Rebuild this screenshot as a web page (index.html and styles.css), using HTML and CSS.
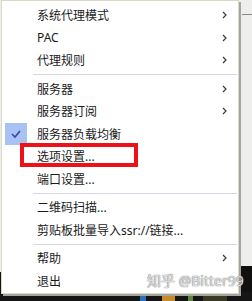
FILE: index.html
```html
<!DOCTYPE html>
<html lang="zh-CN">
<head>
	<meta charset="UTF-8">
	<title>菜单</title>
	<link rel="stylesheet" href="styles.css">
</head>
<body>
<div class="screen">
    <div class="menu">
        <div class="item"><span class="mark"></span><span class="label">系统代理模式</span><span class="arrow"><svg width="5" height="8" viewBox="0 0 5 8"><polyline points="1,1 4,4 1,7"/></svg></span></div>
        <div class="item"><span class="mark"></span><span class="label">PAC</span><span class="arrow"><svg width="5" height="8" viewBox="0 0 5 8"><polyline points="1,1 4,4 1,7"/></svg></span></div>
        <div class="item"><span class="mark"></span><span class="label">代理规则</span><span class="arrow"><svg width="5" height="8" viewBox="0 0 5 8"><polyline points="1,1 4,4 1,7"/></svg></span></div>
        <div class="sep"></div>
        <div class="item"><span class="mark"></span><span class="label">服务器</span><span class="arrow"><svg width="5" height="8" viewBox="0 0 5 8"><polyline points="1,1 4,4 1,7"/></svg></span></div>
        <div class="item"><span class="mark"></span><span class="label">服务器订阅</span><span class="arrow"><svg width="5" height="8" viewBox="0 0 5 8"><polyline points="1,1 4,4 1,7"/></svg></span></div>
        <div class="item"><span class="mark checked"><svg width="22" height="22" viewBox="0 0 22 22"><polyline points="7,11 10,14 15,8"/></svg></span><span class="label">服务器负载均衡</span></div>
        <div class="item"><span class="mark"></span><span class="label">选项设置...</span></div>
        <div class="item"><span class="mark"></span><span class="label">端口设置...</span></div>
        <div class="sep"></div>
        <div class="item"><span class="mark"></span><span class="label">二维码扫描...</span></div>
        <div class="item"><span class="mark"></span><span class="label">剪贴板批量导入ssr://链接...</span></div>
        <div class="sep"></div>
        <div class="item"><span class="mark"></span><span class="label">帮助</span><span class="arrow"><svg width="5" height="8" viewBox="0 0 5 8"><polyline points="1,1 4,4 1,7"/></svg></span></div>
        <div class="item"><span class="mark"></span><span class="label">退出</span></div>
    </div>
    <div class="highlight"></div>
    <div class="watermark">知乎 @Bitter99</div>
</div>
</body>
</html>
```

FILE: styles.css
```css
*
{
    margin: 0;
    padding: 0;
    box-sizing: border-box;
}
body
{
    font-family: "Noto Sans", "Noto Sans CJK SC", sans-serif;
    font-size: 12px;
    color: #1b1b1b;
}
.screen
{
    position: relative;
    overflow: hidden;
    display: flex;
    align-items: flex-start;
    width: 252px;
    height: 301px;

    background:
        linear-gradient(#2a6fc0, #2a6fc0) 140px 296px / 6px 5px no-repeat,
        linear-gradient(#c88a2a, #c88a2a) 162px 295px / 13px 6px no-repeat,
        linear-gradient(#5c8a3a, #5c8a3a) 188px 296px / 5px 5px no-repeat,
        linear-gradient(#3a3a22, #3a3a22) 203px 294px / 24px 7px no-repeat,
        linear-gradient(#151515, #151515) 0 292px / 100% 9px no-repeat,
        linear-gradient(#151515, #151515) 0 272px / 2px 20px no-repeat,
        linear-gradient(#101010, #101010) 240px 266px / 12px 26px no-repeat,
        linear-gradient(#8a8a8a, #8a8a8a) 242px 14px / 10px 1px no-repeat,
        #eeeeec;
}
.menu
{
    width: 238px;
    margin-left: 1px;
    padding-top: 3px;
    padding-bottom: 1px;

    border: 1px solid #dcd8c6;
    background: #fff;
    box-shadow: 2px 2px 0 #a4a4a0;
}
.item
{
    display: flex;
    align-items: center;
    height: 22.5px;
    white-space: nowrap;
}
.mark
{
    flex: none;
    width: 22px;
    height: 22px;
    margin-left: 3px;
    margin-right: 10px;
}
.mark.checked
{
    background: #a9c1f3;
}
.mark svg polyline
{
    fill: none;
    stroke: #2c4f9e;
    stroke-width: 1.6;
}
.label
{
    flex: 1;
}
.arrow
{
    flex: none;
    display: flex;
    width: 5px;
    margin-right: 11px;
}
.arrow polyline
{
    fill: none;
    stroke: #3a3a3a;
    stroke-width: 1.2;
}
.sep
{
    height: 1px;
    margin: 2.5px 1px 2.5px 31px;
    background: #d6d6e8;
}
.highlight
{
    position: absolute;
    top: 143px;
    left: 20px;
    width: 118px;
    height: 24px;
    border: 4px solid #ec1218;
}
.watermark
{
    position: absolute;
    top: 270px;
    left: 147px;
    font-size: 14px;
    color: rgba(255, 255, 255, .75);
    text-shadow: 0 0 1px #777, 0 0 1px #777;
    white-space: nowrap;
}
```
